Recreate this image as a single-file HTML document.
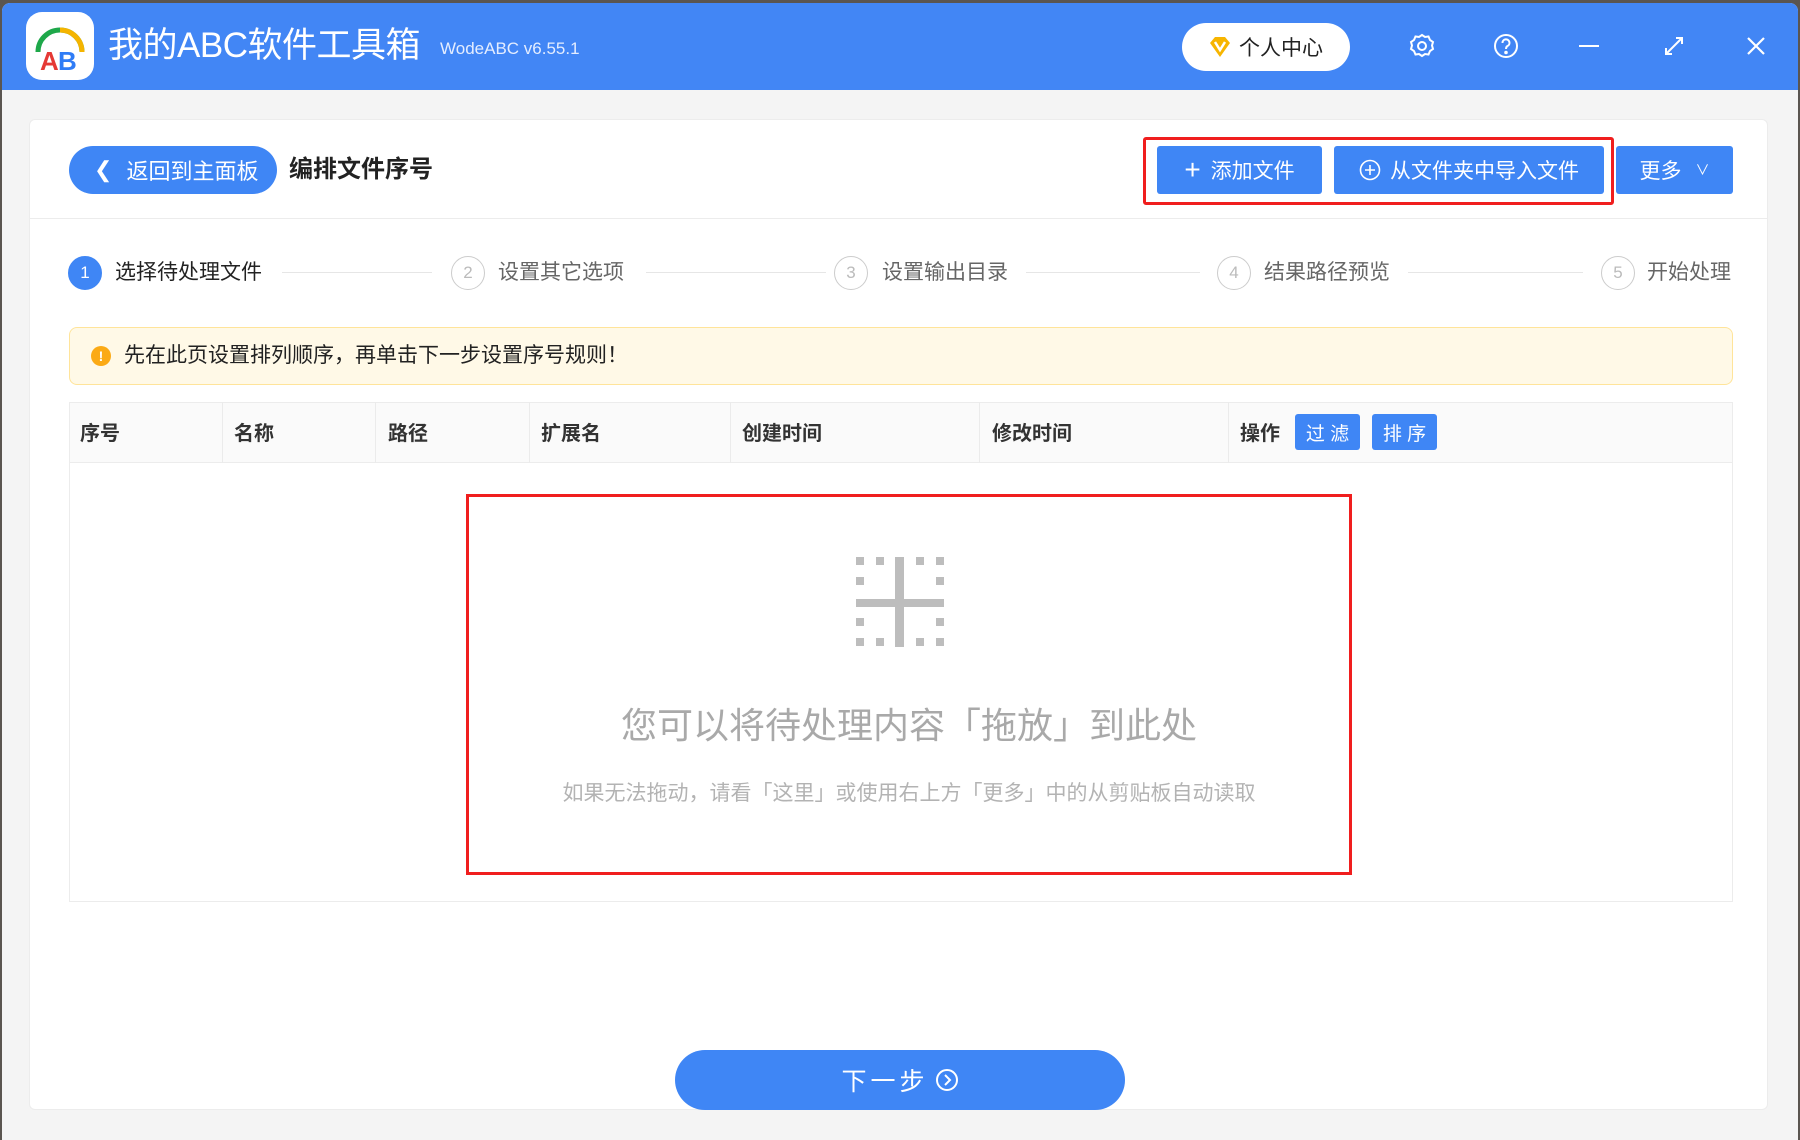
<!DOCTYPE html>
<html><head><meta charset="utf-8"><style>
*{box-sizing:border-box;margin:0;padding:0}
body{width:1800px;height:1140px;overflow:hidden;background:#5a5550;font-family:"Liberation Sans","Noto Sans CJK SC",sans-serif;position:relative}
.abs{position:absolute}
.win{left:2px;top:3px;width:1796px;height:1137px;background:#f4f4f4;border-radius:8px 8px 0 0;overflow:hidden}
.title{left:0;top:0;width:1796px;height:87px;background:#4286f5}
.card{left:29px;top:119px;width:1739px;height:991px;background:#fff;border-radius:6px;border:1px solid #ececec}
.btn{background:#3f86f5;color:#fff;border-radius:3px;display:flex;align-items:center;justify-content:center;font-size:21px}
.step{font-size:21px;color:#666;top:259px;height:28px;line-height:28px}
.circ{width:34px;height:34px;border-radius:50%;border:1px solid #ccc;color:#bbb;font-size:17px;display:flex;align-items:center;justify-content:center;top:256px}
.ln{height:1px;background:#e6e6e6;top:272px}
.th{font-size:20px;font-weight:bold;color:#333;top:420px;line-height:28px}
.vd{width:1px;background:#ebebeb;top:402px;height:61px}
.sq{width:8px;height:8px;background:#bdbdbd}
</style></head><body>
<div class="abs win">
<div class="abs title"></div>
</div>
<div class="abs" style="left:26px;top:12px;width:68px;height:68px;background:#fff;border-radius:16px"></div>
<svg class="abs" style="left:26px;top:12px" width="68" height="68" viewBox="0 0 68 68">
<path d="M12 40 A22 22 0 0 1 56 40" fill="none" stroke="#1ea84a" stroke-width="5"/>
<path d="M34 18 A22 22 0 0 1 56 40" fill="none" stroke="#f5b400" stroke-width="5"/>
<text x="14" y="58" font-family="Liberation Sans" font-weight="bold" font-size="26" fill="#e53935">A</text>
<text x="32" y="58" font-family="Liberation Sans" font-weight="bold" font-size="26" fill="#2f7cf6">B</text>
</svg>
<div class="abs" style="left:108px;top:24px;font-size:35px;color:#fff;line-height:44px;letter-spacing:-0.5px">我的ABC软件工具箱</div>
<div class="abs" style="left:440px;top:38px;font-size:17px;color:#e4edff;line-height:22px">WodeABC v6.55.1</div>
<div class="abs" style="left:1182px;top:23px;width:168px;height:48px;background:#fff;border-radius:24px;font-size:21px;color:#222;display:flex;align-items:center;padding-left:25px">
<svg width="26" height="26" viewBox="0 0 26 26" style="margin-right:6px"><path d="M3 9 L8 3 H18 L23 9 L13 23 Z" fill="#f7b500"/><path d="M8 8 L13 16 L18 8" fill="none" stroke="#fff" stroke-width="2.5"/></svg>个人中心</div>
<svg class="abs" style="left:1408px;top:32px" width="28" height="28" viewBox="0 0 28 28" fill="none" stroke="#fff" stroke-width="2"><circle cx="14" cy="14" r="4"/><path d="M14 3l3 2 3.5-.5 1.5 3.5 3 2-1 3.5 1 3.5-3 2-1.5 3.5-3.5-.5-3 2-3-2-3.5.5-1.5-3.5-3-2 1-3.5-1-3.5 3-2 1.5-3.5 3.5.5z"/></svg>
<svg class="abs" style="left:1492px;top:32px" width="28" height="28" viewBox="0 0 28 28" fill="none" stroke="#fff" stroke-width="2"><circle cx="14" cy="14" r="11"/><path d="M10.5 11a3.5 3.5 0 1 1 5 3c-1.2.7-1.5 1.3-1.5 3"/><circle cx="14" cy="20.5" r=".8" fill="#fff"/></svg>
<div class="abs" style="left:1579px;top:45px;width:20px;height:2px;background:#fff"></div>
<svg class="abs" style="left:1662px;top:34px" width="24" height="24" viewBox="0 0 24 24" fill="none" stroke="#fff" stroke-width="2"><path d="M4 20 L20 4 M14 4h6v6 M4 14v6h6"/></svg>
<svg class="abs" style="left:1746px;top:36px" width="20" height="20" viewBox="0 0 20 20" stroke="#fff" stroke-width="2.2"><path d="M2 2 L18 18 M18 2 L2 18"/></svg>

<div class="abs card"></div>
<div class="abs" style="left:30px;top:218px;width:1737px;height:1px;background:#ececec"></div>
<div class="abs btn" style="left:69px;top:146px;width:208px;height:48px;border-radius:24px;font-size:22px;justify-content:flex-start;padding-left:25px"><span style="font-size:22px;margin-right:14px">&#x276E;</span>返回到主面板</div>
<div class="abs" style="left:289px;top:154px;font-size:24px;font-weight:bold;color:#222;line-height:32px">编排文件序号</div>
<div class="abs btn" style="left:1157px;top:146px;width:165px;height:48px"><span style="font-size:28px;font-weight:300;margin-right:10px">+</span>添加文件</div>
<div class="abs btn" style="left:1334px;top:146px;width:270px;height:48px"><svg width="22" height="22" viewBox="0 0 22 22" style="margin-right:9px" fill="none" stroke="#fff" stroke-width="1.6"><circle cx="11" cy="11" r="9.5"/><path d="M11 6v10M6 11h10"/></svg>从文件夹中导入文件</div>
<div class="abs btn" style="left:1616px;top:146px;width:117px;height:48px">更多<span style="font-size:14px;margin-left:14px">&#x2228;</span></div>
<div class="abs" style="left:1143px;top:137px;width:471px;height:68px;border:3px solid #f01e1e;border-radius:3px"></div>

<div class="abs circ" style="left:68px;background:#3f86f5;border-color:#3f86f5;color:#fff">1</div>
<div class="abs step" style="left:115px;color:#222">选择待处理文件</div>
<div class="abs ln" style="left:282px;width:150px"></div>
<div class="abs circ" style="left:451px">2</div>
<div class="abs step" style="left:498px">设置其它选项</div>
<div class="abs ln" style="left:646px;width:180px"></div>
<div class="abs circ" style="left:834px">3</div>
<div class="abs step" style="left:882px">设置输出目录</div>
<div class="abs ln" style="left:1026px;width:174px"></div>
<div class="abs circ" style="left:1217px">4</div>
<div class="abs step" style="left:1264px">结果路径预览</div>
<div class="abs ln" style="left:1408px;width:175px"></div>
<div class="abs circ" style="left:1601px">5</div>
<div class="abs step" style="left:1647px">开始处理</div>

<div class="abs" style="left:69px;top:327px;width:1664px;height:58px;background:#fff9e7;border:1px solid #ffe49a;border-radius:8px"></div>
<div class="abs" style="left:91px;top:346px;width:20px;height:20px;border-radius:50%;background:#fbaa15;color:#fff;font-size:14px;font-weight:bold;text-align:center;line-height:20px">!</div>
<div class="abs" style="left:124px;top:342px;font-size:21px;color:#222;line-height:28px">先在此页设置排列顺序，再单击下一步设置序号规则！</div>

<div class="abs" style="left:69px;top:402px;width:1664px;height:500px;border:1px solid #ececec"></div>
<div class="abs" style="left:70px;top:403px;width:1662px;height:60px;background:#fafafa;border-bottom:1px solid #ececec"></div>
<div class="abs vd" style="left:222px"></div><div class="abs vd" style="left:375px"></div><div class="abs vd" style="left:529px"></div><div class="abs vd" style="left:730px"></div><div class="abs vd" style="left:979px"></div><div class="abs vd" style="left:1228px"></div>
<div class="abs th" style="left:80px">序号</div>
<div class="abs th" style="left:234px">名称</div>
<div class="abs th" style="left:388px">路径</div>
<div class="abs th" style="left:541px">扩展名</div>
<div class="abs th" style="left:742px">创建时间</div>
<div class="abs th" style="left:992px">修改时间</div>
<div class="abs th" style="left:1240px">操作</div>
<div class="abs btn" style="left:1295px;top:414px;width:65px;height:36px;font-size:19px">过 滤</div>
<div class="abs btn" style="left:1372px;top:414px;width:65px;height:36px;font-size:19px">排 序</div>

<div class="abs" style="left:466px;top:494px;width:886px;height:381px;border:3px solid #f01e1e"></div>
<div class="abs" style="left:856px;top:557px;width:89px;height:90px">
<div class="abs sq" style="left:0;top:0"></div><div class="abs sq" style="left:20px;top:0"></div><div class="abs sq" style="left:60px;top:0"></div><div class="abs sq" style="left:80px;top:0"></div>
<div class="abs sq" style="left:0;top:20px"></div><div class="abs sq" style="left:80px;top:20px"></div>
<div class="abs sq" style="left:0;top:61px"></div><div class="abs sq" style="left:80px;top:61px"></div>
<div class="abs sq" style="left:0;top:81px"></div><div class="abs sq" style="left:20px;top:81px"></div><div class="abs sq" style="left:60px;top:81px"></div><div class="abs sq" style="left:80px;top:81px"></div>
<div class="abs" style="left:39px;top:0;width:9px;height:90px;background:#bdbdbd"></div>
<div class="abs" style="left:0;top:42px;width:88px;height:8px;background:#bdbdbd"></div>
</div>
<div class="abs" style="left:466px;top:703px;width:886px;text-align:center;font-size:36px;color:#a9a9a9;line-height:46px">您可以将待处理内容「拖放」到此处</div>
<div class="abs" style="left:466px;top:780px;width:886px;text-align:center;font-size:21px;color:#b3b3b3;line-height:28px">如果无法拖动，请看「这里」或使用右上方「更多」中的从剪贴板自动读取</div>

<div class="abs btn" style="left:675px;top:1050px;width:450px;height:60px;border-radius:30px;font-size:25px;letter-spacing:4px">下一步<svg width="24" height="24" viewBox="0 0 24 24" style="margin-left:6px" fill="none" stroke="#fff" stroke-width="2"><circle cx="12" cy="12" r="10"/><path d="M10 7l5 5-5 5"/></svg></div>
</body></html>
